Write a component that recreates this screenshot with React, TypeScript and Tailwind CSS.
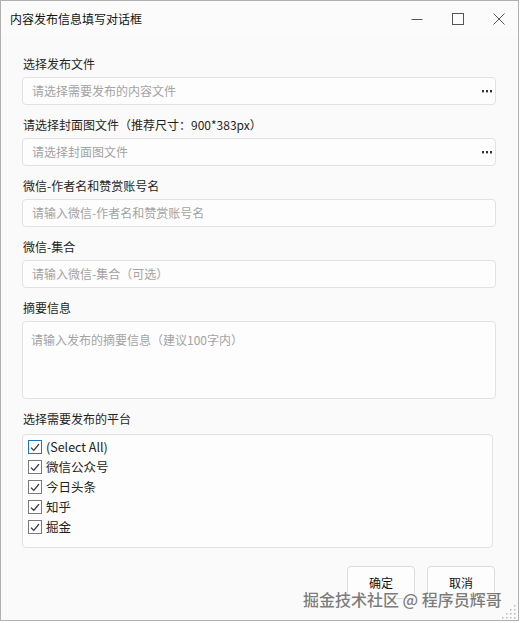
import React from "react";

const font = { fontFamily: '"Noto Sans CJK SC", "Noto Sans", sans-serif' };

function Dots() {
  return (
    <svg width="10" height="3" viewBox="0 0 10 3" className="shrink-0">
      <rect x="0" y="0" width="2" height="2.4" fill="#333" />
      <rect x="4" y="0" width="2" height="2.4" fill="#333" />
      <rect x="8" y="0" width="2" height="2.4" fill="#333" />
    </svg>
  );
}

function Label({ children }: { children: React.ReactNode }) {
  return <div className="h-[20px] leading-[20px] text-[12px] text-[#1f1f1f] pl-[1px]">{children}</div>;
}

function Input({ placeholder, dots }: { placeholder: string; dots?: boolean }) {
  return (
    <div className="mt-[3px] h-[28px] w-[474px] rounded-[4px] border border-[#e2e2e2] bg-[#fdfdfd] flex items-center pl-[9px] pr-[3px]">
      <span className="flex-1 text-[12px] text-[#a3a3a3]">{placeholder}</span>
      {dots && <Dots />}
    </div>
  );
}

function Check({ label, focus }: { label: string; focus?: boolean }) {
  return (
    <div className="h-[20px] flex items-center gap-[4px]">
      <div
        className={
          "w-[14px] h-[14px] border flex items-center justify-center bg-white " +
          (focus ? "border-[#1a73c4]" : "border-[#7a7a7a]")
        }
      >
        <svg width="10" height="9" viewBox="0 0 10 9">
          <path d="M1 4.6 L3.8 7.4 L9 1.2" stroke="#333" strokeWidth="1.3" fill="none" />
        </svg>
      </div>
      <span className="text-[12.5px] text-[#222]">{label}</span>
    </div>
  );
}

export default function App() {
  return (
    <div className="w-[520px] h-[623px] bg-white" style={font}>
      <div className="relative w-[519px] h-[621px] border border-[#b0b0b0] bg-[#fafafa] flex flex-col">
        <div className="h-[35px] flex items-center pl-[9px] bg-[#fbfbfb]">
          <span className="flex-1 text-[12px] text-[#111]">内容发布信息填写对话框</span>
          <div className="flex items-center h-full">
            <svg width="12" height="12" viewBox="0 0 12 12" className="mr-[29px]">
              <path d="M0.5 6.5 H11.5" stroke="#555" strokeWidth="1" />
            </svg>
            <svg width="12" height="12" viewBox="0 0 12 12" className="mr-[29px]">
              <rect x="0.5" y="0.5" width="11" height="11" stroke="#555" strokeWidth="1" fill="none" />
            </svg>
            <svg width="12" height="12" viewBox="0 0 12 12" className="mr-[13px]">
              <path d="M0.5 0.5 L11.5 11.5 M11.5 0.5 L0.5 11.5" stroke="#555" strokeWidth="1" />
            </svg>
          </div>
        </div>

        <div className="flex flex-col pl-[21px] pt-[18px]">
          <Label>选择发布文件</Label>
          <Input placeholder="请选择需要发布的内容文件" dots />

          <div className="mt-[10px]">
            <Label>请选择封面图文件（推荐尺寸：900*383px）</Label>
          </div>
          <Input placeholder="请选择封面图文件" dots />

          <div className="mt-[10px]">
            <Label>微信-作者名和赞赏账号名</Label>
          </div>
          <Input placeholder="请输入微信-作者名和赞赏账号名" />

          <div className="mt-[10px]">
            <Label>微信-集合</Label>
          </div>
          <Input placeholder="请输入微信-集合（可选）" />

          <div className="mt-[10px]">
            <Label>摘要信息</Label>
          </div>
          <div className="mt-[3px] h-[78px] w-[474px] rounded-[4px] border border-[#e2e2e2] bg-[#fdfdfd] pl-[8px] pt-[4px]">
            <span className="text-[12px] text-[#a3a3a3]">请输入发布的摘要信息（建议100字内）</span>
          </div>

          <div className="mt-[10px]">
            <Label>选择需要发布的平台</Label>
          </div>
          <div className="mt-[5px] h-[114px] w-[471px] rounded-[4px] border border-[#e2e2e2] bg-[#fdfdfd] pl-[5px] pt-[2px] flex flex-col">
            <Check label="(Select All)" focus />
            <Check label="微信公众号" />
            <Check label="今日头条" />
            <Check label="知乎" />
            <Check label="掘金" />
          </div>

          <div className="mt-[18px] flex justify-end gap-[12px] pr-[23px]">
            <div className="w-[68px] h-[33px] rounded-[4px] border border-[#dcdcdc] bg-[#fdfdfd] flex items-center justify-center text-[12px] leading-none text-[#111]">
              确定
            </div>
            <div className="w-[68px] h-[33px] rounded-[4px] border border-[#dcdcdc] bg-[#fdfdfd] flex items-center justify-center text-[12px] leading-none text-[#111]">
              取消
            </div>
          </div>
        </div>

        <div className="absolute left-[302px] top-[590px] text-[16px] leading-none font-medium text-[#7c7c7c] whitespace-nowrap [text-shadow:0_0_2px_#fff,0_0_2px_#fff,0_0_3px_#fff]">
          掘金技术社区 @ 程序员辉哥
        </div>

        <svg width="14" height="14" viewBox="0 0 14 14" className="absolute right-[2px] bottom-[1px]">
          {[
            [12, 0], [12, 4], [8, 4], [12, 8], [8, 8], [4, 8], [12, 12], [8, 12], [4, 12], [0, 12],
          ].map(([x, y], i) => (
            <rect key={i} x={x} y={y} width="1.5" height="1.5" fill="#b8b8b8" />
          ))}
        </svg>
      </div>
    </div>
  );
}
